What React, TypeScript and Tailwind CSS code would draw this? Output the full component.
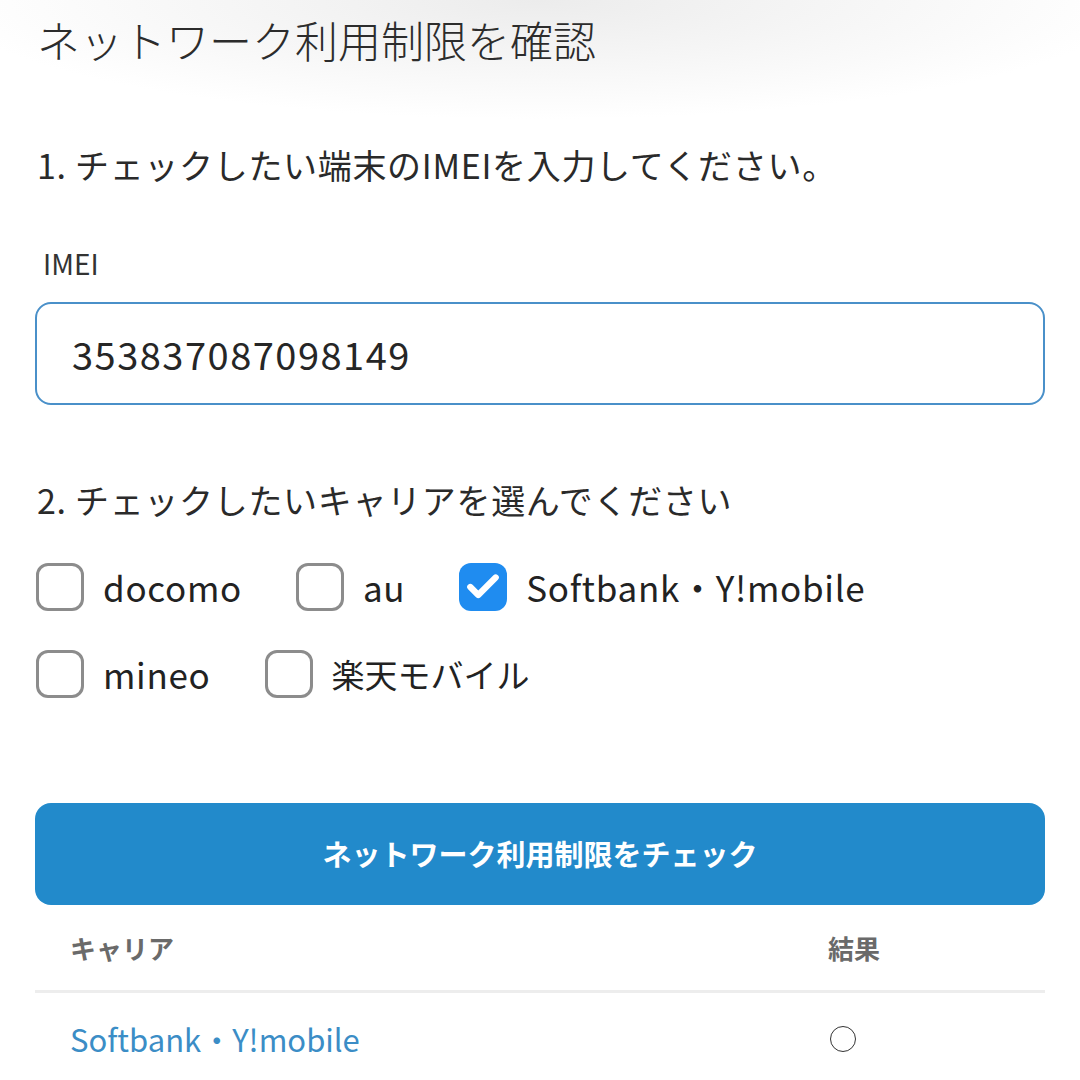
import { Check } from "lucide-react";

const font = { fontFamily: '"Noto Sans CJK JP", "Noto Sans", sans-serif' };

const carriers = [
  { name: "docomo", checked: false },
  { name: "au", checked: false },
  { name: "Softbank・Y!mobile", checked: true },
  { name: "mineo", checked: false },
  { name: "楽天モバイル", checked: false, kana: true },
];

function CheckItem({ name, checked, kana }: { name: string; checked: boolean; kana?: boolean }) {
  return (
    <label className="flex items-center gap-[19px]">
      {checked ? (
        <span className="flex h-[48px] w-[48px] items-center justify-center rounded-[12px] bg-[#1f8cf0]">
          <Check className="h-[38px] w-[38px] text-white" strokeWidth={4} />
        </span>
      ) : (
        <span className="h-[48px] w-[48px] rounded-[12px] border-[3px] border-[#8c8c8c] bg-white" />
      )}
      <span
        className={
          kana
            ? "text-[33px] leading-[48px] text-[#222]"
            : "text-[35px] leading-[48px] tracking-[0.02em] text-[#222]"
        }
      >
        {name}
      </span>
    </label>
  );
}

export default function App() {
  return (
    <div
      className="min-h-screen bg-[radial-gradient(ellipse_55%_11%_at_50%_0%,#ececec_0%,#ffffff_100%)] px-[35px] pt-[11px]"
      style={font}
    >
      <h1 className="pl-[2px] text-[43px] font-light leading-[56px] text-[#2c2c2c]">
        ネットワーク利用制限を確認
      </h1>

      <p className="mt-[74px] pl-[2px] text-[34px] leading-[48px] tracking-[0.02em] text-[#2a2a2a]">
        1. チェックしたい端末のIMEIを入力してください。
      </p>

      <p className="mt-[54px] pl-[8px] text-[28px] leading-[40px] text-[#333]">IMEI</p>

      <div className="mt-[19px] flex h-[103px] items-center rounded-[16px] border-2 border-[#4a90c9] bg-white px-[35px]">
        <span className="text-[38px] tracking-[1.5px] text-[#262626]">353837087098149</span>
      </div>

      <p className="mt-[71px] pl-[2px] text-[34px] leading-[48px] tracking-[0.02em] text-[#2a2a2a]">
        2. チェックしたいキャリアを選んでください
      </p>

      <div className="mt-[39px] flex flex-wrap gap-x-[54px] gap-y-[39px] pl-[1px]">
        {carriers.map((c) => (
          <CheckItem key={c.name} name={c.name} checked={c.checked} kana={c.kana} />
        ))}
      </div>

      <button className="mt-[105px] flex h-[102px] w-full items-center justify-center rounded-[16px] bg-[#228acb] text-[29px] font-bold text-white">
        ネットワーク利用制限をチェック
      </button>

      <div className="flex h-[88px] items-center border-b-[3px] border-[#ededed] px-[35px] text-[26px] font-bold text-[#6a6a6a]">
        <span className="w-[758px]">キャリア</span>
        <span>結果</span>
      </div>
      <div className="flex h-[92px] items-center px-[35px]">
        <span className="w-[760px] text-[31px] text-[#3b8dc6]">Softbank・Y!mobile</span>
        <span className="h-[26px] w-[26px] rounded-full border-[1.5px] border-[#333]" />
      </div>
    </div>
  );
}
